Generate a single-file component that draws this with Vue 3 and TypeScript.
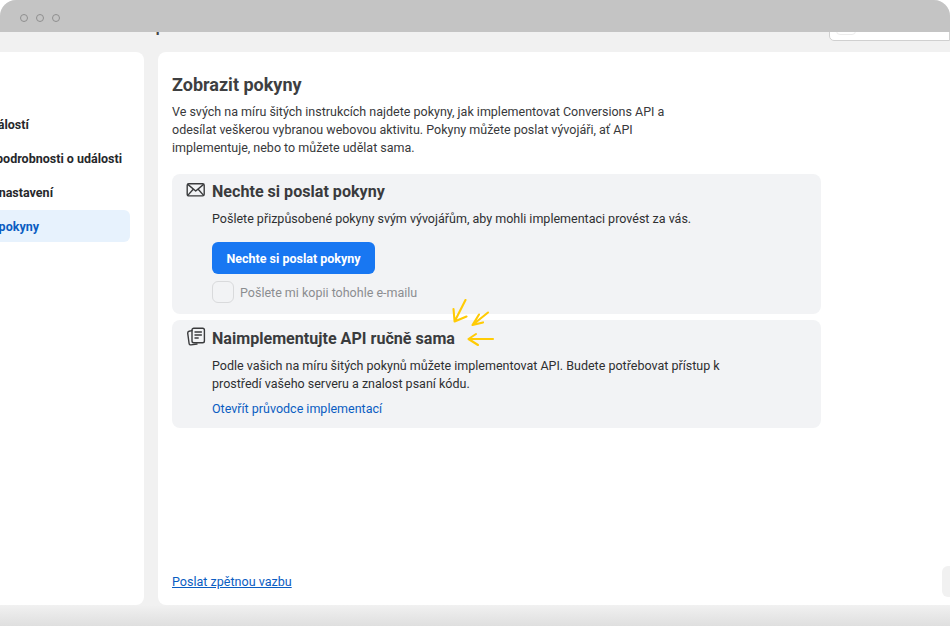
<script setup lang="ts">
const steps = [
  { label: 'Zvolit událostí', active: false },
  { label: 'Přidejte podrobnosti o události', active: false },
  { label: 'Ověřit si nastavení', active: false },
  { label: 'Zobrazit pokyny', active: true },
]
</script>

<template>
  <div class="window">
    <div class="titlebar">
      <span class="dot"></span><span class="dot"></span><span class="dot"></span>
    </div>
    <div class="page-head">
      <div class="page-title">Nastavení Conversions API pro vaše webové události</div>
      <div class="search"><span class="search-box"></span><span class="search-icon"></span></div>
    </div>
    <div class="body">
      <aside class="sidebar">
        <ul class="steps">
          <li v-for="s in steps" :key="s.label" class="step" :class="{ active: s.active }">{{ s.label }}</li>
        </ul>
      </aside>
      <main class="panel">
        <h1 class="title">Zobrazit pokyny</h1>
        <p class="intro">Ve svých na míru šitých instrukcích najdete pokyny, jak implementovat Conversions API a odesílat veškerou vybranou webovou aktivitu. Pokyny můžete poslat vývojáři, ať API implementuje, nebo to můžete udělat sama.</p>

        <section class="card first">
          <div class="card-head">
            <svg class="icon" width="20" height="16" viewBox="0 0 20 16" fill="none" stroke="#3a3b3d" stroke-width="1.4" stroke-linejoin="round">
              <rect x="1.2" y="1.7" width="17" height="12.2" rx="1.6" />
              <path d="M1.8 2.4 9.7 9l7.9-6.6M1.8 13.4l5.4-6.2M17.6 13.4l-5.4-6.2" />
            </svg>
            <h2>Nechte si poslat pokyny</h2>
          </div>
          <p class="card-text">Pošlete přizpůsobené pokyny svým vývojářům, aby mohli implementaci provést za vás.</p>
          <button class="primary" type="button">Nechte si poslat pokyny</button>
          <label class="check"><span class="box"></span><span>Pošlete mi kopii tohohle e-mailu</span></label>
        </section>

        <section class="card second">
          <div class="card-head">
            <svg class="icon" width="20" height="20" viewBox="0 0 20 20" fill="none" stroke="#3a3b3d" stroke-width="1.4" stroke-linejoin="round" stroke-linecap="round">
              <rect x="6" y="1.2" width="12.4" height="14.6" rx="1.8" />
              <path d="M9 5h6.4M9 8h6.4M9 11h3.2" />
              <path d="M6 3.6 3 4.2c-.9.2-1.4 1-1.3 1.9l1.4 10.4c.1.9 1 1.5 1.9 1.4l6-.9" />
            </svg>
            <h2>Naimplementujte API ručně sama</h2>
          </div>
          <p class="card-text wrap">Podle vašich na míru šitých pokynů můžete implementovat API. Budete potřebovat přístup k prostředí vašeho serveru a znalost psaní kódu.</p>
          <a class="guide" href="#" @click.prevent>Otevřít průvodce implementací</a>
          <svg class="arrows" width="50" height="54" viewBox="0 0 50 54" fill="none" stroke="#ffcb05" stroke-width="2.1" stroke-linecap="round" stroke-linejoin="round">
            <path d="M15.5 1 4.6 22.5M3.5 10l1.1 12.5 11.9-5" />
            <path d="M38 13.5 22.5 26M29 15.5l-6.5 10.5 10.5-2.6" />
            <path d="M43 40H18.5M26 35l-7.5 5 9.5 6" />
          </svg>
        </section>

        <a class="feedback" href="#" @click.prevent>Poslat zpětnou vazbu</a>
        <div class="side-btn"></div>
      </main>
    </div>
    <div class="footer"></div>
  </div>
</template>

<style>
html, body { margin: 0; background: #ffffff; }
</style>

<style scoped>
.window {
  width: 950px;
  height: 626px;
  display: flex;
  flex-direction: column;
  overflow: hidden;
  background: #f1f1f1;
  font-family: Roboto, "Liberation Sans", sans-serif;
  color: #3a3b3d;
  border-radius: 16px 16px 0 0;
}
.titlebar {
  height: 32px;
  flex: none;
  background: #c4c4c4;
  display: flex;
  align-items: center;
  gap: 8px;
  padding: 4px 0 0 20px;
  box-sizing: border-box;
  position: relative;
  z-index: 1;
}
.dot {
  width: 8px;
  height: 8px;
  box-sizing: border-box;
  border: 1px solid #8f8f8f;
  border-radius: 50%;
}
.page-head {
  height: 20px;
  flex: none;
  overflow: hidden;
  display: flex;
  justify-content: space-between;
  align-items: flex-end;
}
.page-title {
  margin: -23px 0 0 -67px;
  align-self: flex-start;
  font-size: 18px;
  font-weight: 500;
  line-height: 32px;
  white-space: nowrap;
  color: #444;
}
.search {
  width: 121px;
  height: 40px;
  margin: 0 0 11px 0;
  flex: none;
  box-sizing: border-box;
  background: #fff;
  border: 1px solid #d0d0d0;
  border-radius: 5px 0 0 5px;
  position: relative;
}
.search-box {
  position: absolute;
  left: 6px;
  bottom: 5px;
  width: 20px;
  height: 20px;
  box-sizing: border-box;
  border: 1px solid #ececec;
  border-radius: 4px;
}
.search-icon {
  position: absolute;
  left: 83px;
  bottom: 8px;
  width: 1px;
  height: 3px;
  background: #777;
}
.body {
  flex: 1;
  min-height: 0;
  display: flex;
  gap: 14px;
}
.sidebar {
  width: 144px;
  flex: none;
  background: #fff;
  border-radius: 0 8px 8px 0;
  overflow: hidden;
  padding-top: 56px;
  box-sizing: border-box;
}
.steps {
  list-style: none;
  margin: 0;
  padding: 0 14px 0 0;
  display: flex;
  flex-direction: column;
  gap: 2px;
}
.step {
  height: 32px;
  margin-left: -63px;
  padding-left: 12px;
  line-height: 33px;
  font-size: 12.5px;
  font-weight: 700;
  white-space: nowrap;
  color: #26282b;
  border-radius: 6px;
}
.step.active {
  background: #e7f2fd;
  color: #0a5dc2;
}
.panel {
  flex: 1;
  min-width: 0;
  position: relative;
  background: #fff;
  border-radius: 8px 0 0 8px;
  padding: 21px 0 0 14px;
  box-sizing: border-box;
  display: flex;
  flex-direction: column;
}
.title {
  margin: 0;
  font-size: 18px;
  line-height: 24px;
  font-weight: 700;
  color: #3e3f41;
}
.intro {
  margin: 6px 0 0;
  width: 510px;
  font-size: 12.5px;
  line-height: 18px;
  color: #38393b;
}
.card {
  position: relative;
  width: 649px;
  box-sizing: border-box;
  background: #f2f3f5;
  border-radius: 8px;
  padding: 6px 0 0 40px;
}
.card.first {
  margin-top: 17px;
  height: 140px;
}
.card.second {
  margin-top: 6px;
  height: 108px;
  padding-top: 7px;
}
.card-head {
  display: flex;
  align-items: center;
  height: 24px;
  position: relative;
}
.icon {
  position: absolute;
  left: -26px;
  top: 2px;
}
.card.second .icon {
  top: 0;
  left: -26px;
}
.card-head h2 {
  margin: 0;
  font-size: 16.1px;
  line-height: 24px;
  font-weight: 700;
  color: #3a3b3d;
}
.card-text {
  margin: 6px 0 0;
  font-size: 12.5px;
  line-height: 18px;
  color: #2e2f31;
  white-space: nowrap;
}
.card-text.wrap {
  width: 520px;
  white-space: normal;
}
.primary {
  display: block;
  margin-top: 14px;
  width: 163px;
  height: 32px;
  padding: 0;
  border: 0;
  border-radius: 6px;
  background: #1877f2;
  color: #fff;
  font-family: inherit;
  font-size: 12.5px;
  font-weight: 700;
}
.check {
  display: flex;
  align-items: center;
  gap: 6px;
  margin-top: 7px;
  font-size: 12.5px;
  color: #8b8d90;
}
.box {
  width: 22px;
  height: 22px;
  box-sizing: border-box;
  border: 1px solid #d9dadc;
  border-radius: 6px;
  background: #f2f3f5;
}
.guide {
  display: block;
  margin-top: 7px;
  font-size: 12.5px;
  line-height: 18px;
  color: #0a5dc2;
  text-decoration: none;
}
.arrows {
  position: absolute;
  left: 278px;
  top: -21px;
}
.feedback {
  position: absolute;
  left: 14px;
  bottom: 14px;
  font-size: 12.55px;
  line-height: 18px;
  color: #0a5dc2;
}
.side-btn {
  position: absolute;
  right: -8px;
  bottom: 8px;
  width: 16px;
  height: 31px;
  background: #f1f1f1;
  border-radius: 6px;
}
.footer {
  height: 21px;
  flex: none;
  background: linear-gradient(#f1f1f1, #dfdfdf);
}
</style>
